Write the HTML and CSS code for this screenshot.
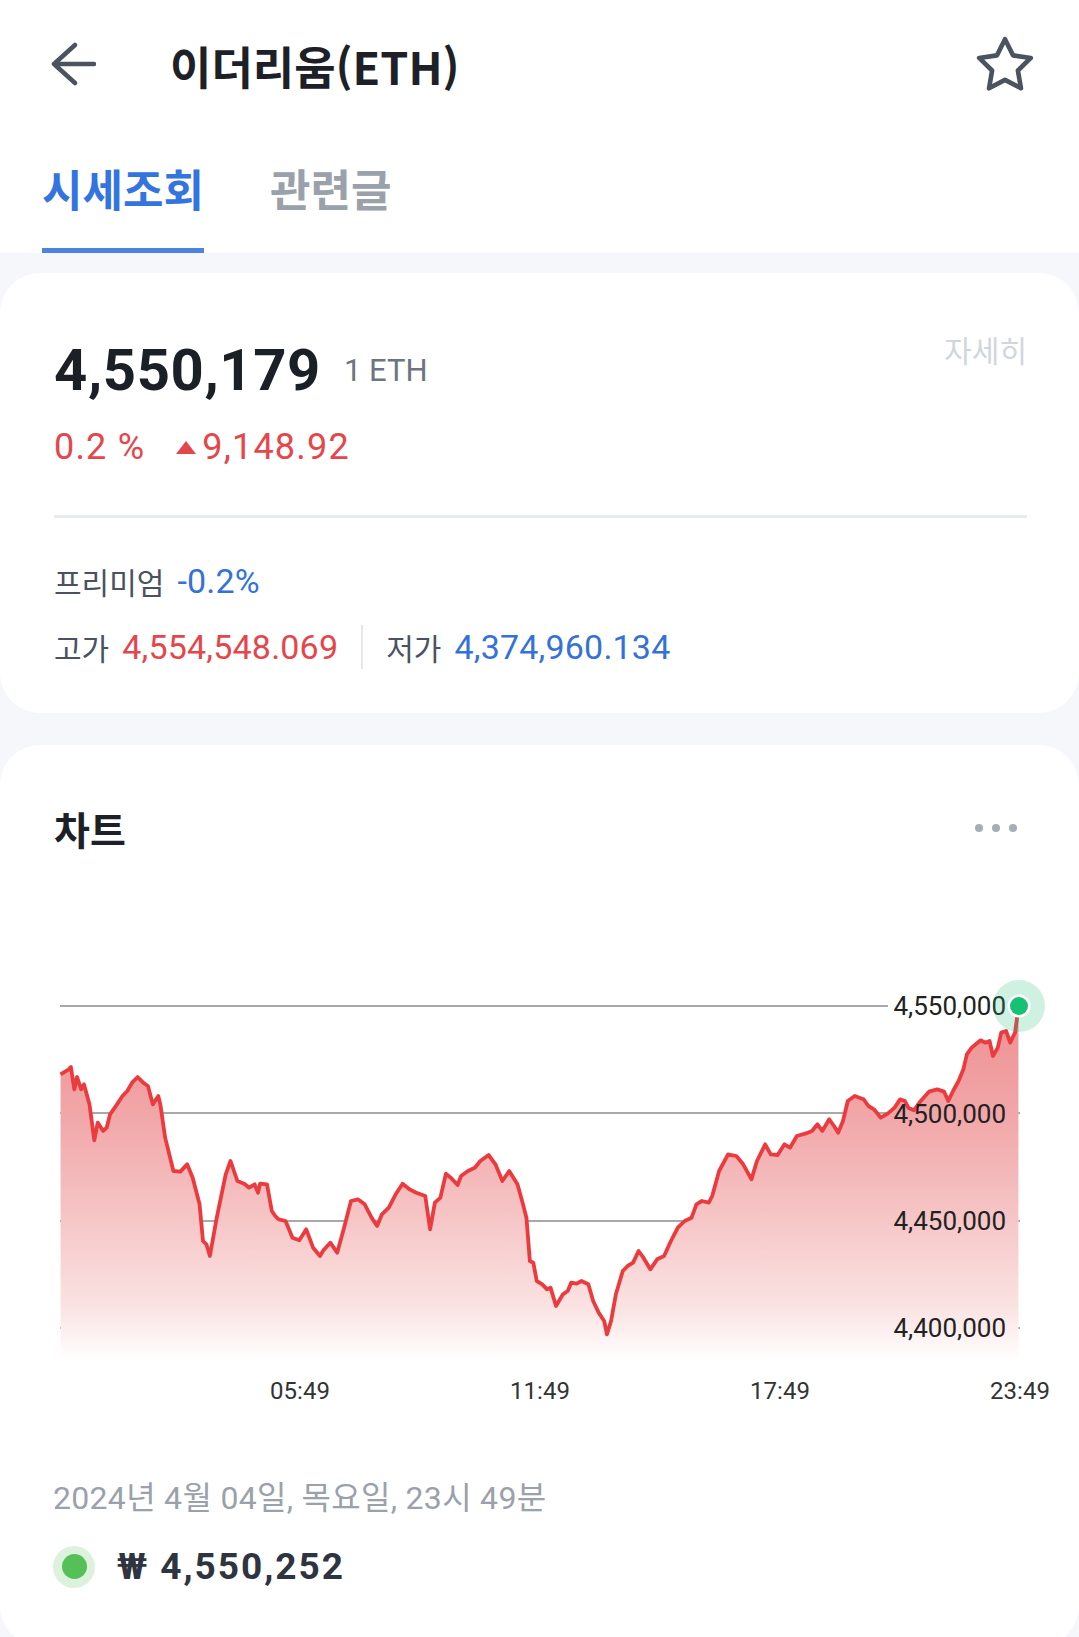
FILE: index.html
```html
<!DOCTYPE html>
<html lang="ko">
<head>
    <meta charset="UTF-8">
    <meta name="viewport" content="width=device-width, initial-scale=1.0">
    <title>이더리움(ETH)</title>
    <link rel="stylesheet" href="styles.css">
</head>
<body>
    <div class="top">
        <header class="header">
            <svg class="back" width="48" height="48" viewBox="0 0 48 48" fill="none" stroke="#4b5260" stroke-width="4.5" stroke-linecap="round" stroke-linejoin="round">
                <path d="M46 23H6M27 4L6 23L27 42"/>
            </svg>
            <h1 class="title">이더리움(ETH)</h1>
            <svg class="star" width="62" height="62" viewBox="0 0 24 24" fill="none" stroke="#4b5260" stroke-width="1.8" stroke-linejoin="round">
                <path d="M12 2l3.09 6.26L22 9.27l-5 4.87 1.18 6.88L12 17.77l-6.18 3.25L7 14.14 2 9.27l6.91-1.01L12 2z"/>
            </svg>
        </header>
        <nav class="tabs">
            <span class="tab active">시세조회</span>
            <span class="tab">관련글</span>
        </nav>
    </div>

    <section class="card summary">
        <div class="price-row">
            <div class="price-main">
                <span class="price">4,550,179</span>
                <span class="unit">1 ETH</span>
            </div>
            <span class="detail">자세히</span>
        </div>
        <div class="change">
            <span class="rate">0.2 %</span>
            <svg class="tri" width="22" height="15" viewBox="0 0 22 15"><path d="M11 1L21 14H1z" fill="#e5464b"/></svg>
            <span>9,148.92</span>
        </div>
        <div class="divider"></div>
        <div class="stat premium">
            <span class="label">프리미엄</span>
            <span class="down">-0.2%</span>
        </div>
        <div class="stat range">
            <span class="label">고가</span>
            <span class="up">4,554,548.069</span>
            <span class="sep"></span>
            <span class="label">저가</span>
            <span class="down">4,374,960.134</span>
        </div>
    </section>

    <section class="card chart">
        <div class="chart-head">
            <h2 class="chart-title">차트</h2>
            <div class="more"><span></span><span></span><span></span></div>
        </div>

        <svg class="plot" width="1079" height="450" viewBox="0 960 1079 450">
            <defs>
                <linearGradient id="area" x1="0" y1="0" x2="0" y2="1">
                    <stop offset="0" stop-color="#ee8f92"/>
                    <stop offset="0.3" stop-color="#f1a6a8"/>
                    <stop offset="0.6" stop-color="#f6c6c7"/>
                    <stop offset="0.85" stop-color="#fbe3e3"/>
                    <stop offset="1" stop-color="#ffffff"/>
                </linearGradient>
            </defs>
            <g class="grid">
                <line x1="60" y1="1005" x2="888" y2="1005"/>
                <line x1="60" y1="1112" x2="1020" y2="1112"/>
                <line x1="60" y1="1220" x2="1020" y2="1220"/>
                <line x1="60" y1="1327" x2="1020" y2="1327"/>
            </g>
            <!-- price series, drawn in a stretched box -->
            <svg x="0" y="960" width="1079" height="450" viewBox="0 -120 1568 1350" preserveAspectRatio="none">
                <path fill="url(#area)" d="M88,1080 L88,220 L100,205 L103,198 L108,265 L112,228 L118,265 L122,250 L130,310 L137,418 L142,365 L150,390 L155,380 L160,340 L170,310 L178,285 L185,270 L192,245 L200,228 L208,245 L215,255 L222,310 L230,285 L233,310 L240,410 L252,510 L262,512 L272,490 L280,530 L290,610 L295,720 L300,730 L305,765 L315,650 L328,520 L335,480 L345,540 L355,548 L362,560 L370,550 L375,575 L378,548 L388,550 L395,630 L400,645 L405,655 L415,660 L425,710 L435,718 L445,685 L455,740 L465,765 L470,748 L480,725 L490,755 L500,680 L510,600 L520,595 L530,610 L540,650 L548,675 L555,640 L565,620 L575,580 L585,548 L595,565 L605,575 L618,585 L625,685 L632,605 L640,590 L648,518 L655,530 L665,552 L670,525 L680,510 L690,500 L698,480 L710,462 L720,490 L730,540 L740,510 L752,550 L760,610 L765,650 L770,780 L775,785 L780,840 L788,850 L795,865 L800,860 L808,915 L818,880 L825,870 L830,845 L838,848 L845,840 L855,850 L862,900 L870,935 L878,960 L882,1000 L888,960 L895,880 L905,810 L912,795 L920,785 L928,750 L935,770 L945,805 L955,775 L965,765 L975,720 L985,680 L995,660 L1005,650 L1012,610 L1020,600 L1030,605 L1035,585 L1045,510 L1058,460 L1070,465 L1080,490 L1092,535 L1100,480 L1112,430 L1120,460 L1130,462 L1140,430 L1148,440 L1158,405 L1170,398 L1180,390 L1188,370 L1195,390 L1205,355 L1212,375 L1218,395 L1225,360 L1232,300 L1242,285 L1255,295 L1262,315 L1270,325 L1280,350 L1290,338 L1300,320 L1308,295 L1315,300 L1320,320 L1328,328 L1338,300 L1350,272 L1362,265 L1372,272 L1378,300 L1385,270 L1393,240 L1400,205 L1405,160 L1412,140 L1418,130 L1425,118 L1432,125 L1438,120 L1443,165 L1450,140 L1455,95 L1462,90 L1468,125 L1475,95 L1480,20 L1480,1080 Z"/>
                <path class="line" d="M88,220 L100,205 L103,198 L108,265 L112,228 L118,265 L122,250 L130,310 L137,418 L142,365 L150,390 L155,380 L160,340 L170,310 L178,285 L185,270 L192,245 L200,228 L208,245 L215,255 L222,310 L230,285 L233,310 L240,410 L252,510 L262,512 L272,490 L280,530 L290,610 L295,720 L300,730 L305,765 L315,650 L328,520 L335,480 L345,540 L355,548 L362,560 L370,550 L375,575 L378,548 L388,550 L395,630 L400,645 L405,655 L415,660 L425,710 L435,718 L445,685 L455,740 L465,765 L470,748 L480,725 L490,755 L500,680 L510,600 L520,595 L530,610 L540,650 L548,675 L555,640 L565,620 L575,580 L585,548 L595,565 L605,575 L618,585 L625,685 L632,605 L640,590 L648,518 L655,530 L665,552 L670,525 L680,510 L690,500 L698,480 L710,462 L720,490 L730,540 L740,510 L752,550 L760,610 L765,650 L770,780 L775,785 L780,840 L788,850 L795,865 L800,860 L808,915 L818,880 L825,870 L830,845 L838,848 L845,840 L855,850 L862,900 L870,935 L878,960 L882,1000 L888,960 L895,880 L905,810 L912,795 L920,785 L928,750 L935,770 L945,805 L955,775 L965,765 L975,720 L985,680 L995,660 L1005,650 L1012,610 L1020,600 L1030,605 L1035,585 L1045,510 L1058,460 L1070,465 L1080,490 L1092,535 L1100,480 L1112,430 L1120,460 L1130,462 L1140,430 L1148,440 L1158,405 L1170,398 L1180,390 L1188,370 L1195,390 L1205,355 L1212,375 L1218,395 L1225,360 L1232,300 L1242,285 L1255,295 L1262,315 L1270,325 L1280,350 L1290,338 L1300,320 L1308,295 L1315,300 L1320,320 L1328,328 L1338,300 L1350,272 L1362,265 L1372,272 L1378,300 L1385,270 L1393,240 L1400,205 L1405,160 L1412,140 L1418,130 L1425,118 L1432,125 L1438,120 L1443,165 L1450,140 L1455,95 L1462,90 L1468,125 L1475,95 L1480,20"/>
            </svg>
            <g class="ylabels">
                <text x="1006" y="1005">4,550,000</text>
                <text x="1006" y="1113">4,500,000</text>
                <text x="1006" y="1220">4,450,000</text>
                <text x="1006" y="1327">4,400,000</text>
            </g>
            <g class="xlabels">
                <text x="300" y="1390">05:49</text>
                <text x="540" y="1390">11:49</text>
                <text x="780" y="1390">17:49</text>
                <text x="1020" y="1390">23:49</text>
            </g>
            <circle cx="1019" cy="1005" r="26" fill="rgba(30, 190, 120, 0.22)"/>
            <circle cx="1019" cy="1005" r="11.5" fill="#fff"/>
            <circle cx="1019" cy="1005" r="9" fill="#15c274"/>
        </svg>

        <div class="info">
            <p class="date">2024년 4월 04일, 목요일, 23시 49분</p>
            <div class="now">
                <span class="live"></span>
                <span class="now-price">₩ 4,550,252</span>
            </div>
        </div>
    </section>
</body>
</html>
```

FILE: styles.css
```css
body{
    margin: 0;
    background-color: #f5f7fb;
    font-family: Roboto, "Noto Sans CJK KR", sans-serif;
    color: #1f2329;
}

.top{
    background-color: #fff;
}
.header{
    height: 130px;
    display: flex;
    align-items: center;
    padding: 0 43px 0 48px;
}
.title{
    margin: 0 0 0 74px;
    font-family: "Noto Sans CJK KR", sans-serif;
    font-size: 45px;
    font-weight: 700;
    color: #1d2127;
}
.star{
    margin-left: auto;
}

.tabs{
    display: flex;
    align-items: flex-end;
    gap: 66px;
    height: 123px;
    padding: 0 42px;
}
.tab{
    font-family: "Noto Sans CJK KR", sans-serif;
    font-size: 44px;
    line-height: 44px;
    font-weight: 700;
    color: #9aa1ab;
    padding-bottom: 43px;
}
.tab.active{
    color: #3474de;
    border-bottom: 5px solid #4a84dc;
    padding-bottom: 38px;
}

.card{
    background-color: #fff;
    border-radius: 40px;
}

/* summary */
.summary{
    margin-top: 20px;
    padding: 68px 52px 48px 54px;
}
.price-row{
    display: flex;
    justify-content: space-between;
    align-items: flex-start;
}
.price-main{
    display: flex;
    align-items: center;
    gap: 23px;
}
.price{
    font-size: 58px;
    line-height: 1;
    font-weight: 700;
    letter-spacing: 0.6px;
    color: #1b1f26;
}
.unit{
    font-size: 31px;
    line-height: 1;
    color: #6e7581;
}
.detail{
    font-family: "Noto Sans CJK KR", sans-serif;
    font-size: 30px;
    line-height: 30px;
    margin-top: -7px;
    color: #d1d6dd;
}
.change{
    display: flex;
    align-items: center;
    margin-top: 30px;
    font-size: 36px;
    line-height: 1;
    letter-spacing: 1.2px;
    color: #e5464b;
}
.change .rate{
    margin-right: 30px;
}
.change .tri{
    margin-right: 5px;
}
.divider{
    height: 3px;
    margin-top: 50px;
    background-color: #e9ecef;
}
.stat{
    display: flex;
    align-items: center;
    height: 36px;
    font-size: 34px;
    letter-spacing: 0.2px;
}
.premium{
    margin-top: 45px;
}
.range{
    margin-top: 30px;
}
.label{
    font-family: "Noto Sans CJK KR", sans-serif;
    font-size: 30px;
    letter-spacing: 0;
    color: #4a5160;
    margin-right: 13px;
}
.up{
    color: #e5464b;
}
.down{
    color: #3572d8;
}
.sep{
    width: 2px;
    height: 44px;
    margin: 0 23px;
    background-color: #e5e7eb;
}

/* chart */
.chart{
    margin-top: 32px;
    padding: 63px 0 58px;
}
.chart-head{
    display: flex;
    justify-content: space-between;
    align-items: center;
    height: 40px;
    padding: 0 62px 0 54px;
}
.chart-title{
    margin: 0;
    font-family: "Noto Sans CJK KR", sans-serif;
    font-size: 39px;
    font-weight: 700;
    color: #1d2127;
}
.more{
    display: flex;
    gap: 9px;
}
.more span{
    width: 8px;
    height: 8px;
    border-radius: 50%;
    background-color: #a6aebb;
}
.plot{
    display: block;
    margin-top: 113px;
}
.grid line{
    stroke: #8d8d8d;
    stroke-width: 1.5;
}
.line{
    fill: none;
    stroke: #ec3b3f;
    stroke-width: 3.8;
    stroke-linejoin: round;
    vector-effect: non-scaling-stroke;
}
.ylabels text{
    font-family: Roboto, sans-serif;
    font-size: 26px;
    fill: #222;
    text-anchor: end;
    dominant-baseline: central;
}
.xlabels text{
    font-family: Roboto, sans-serif;
    font-size: 24px;
    fill: #333;
    text-anchor: middle;
    dominant-baseline: central;
}

.info{
    margin-top: 69px;
    padding: 0 54px 0 53px;
}
.date{
    margin: 0;
    font-size: 32px;
    line-height: 36px;
    letter-spacing: 0.3px;
    color: #9ba1aa;
}
.now{
    display: flex;
    align-items: center;
    gap: 22px;
    margin-top: 29px;
}
.live{
    width: 42px;
    height: 42px;
    border-radius: 50%;
    background-color: #dcf2dd;
    display: flex;
    align-items: center;
    justify-content: center;
}
.live::after{
    content: "";
    width: 25px;
    height: 25px;
    border-radius: 50%;
    background-color: #55bf58;
}
.now-price{
    font-size: 37px;
    font-weight: 700;
    letter-spacing: 2px;
    color: #2e3440;
}
```
